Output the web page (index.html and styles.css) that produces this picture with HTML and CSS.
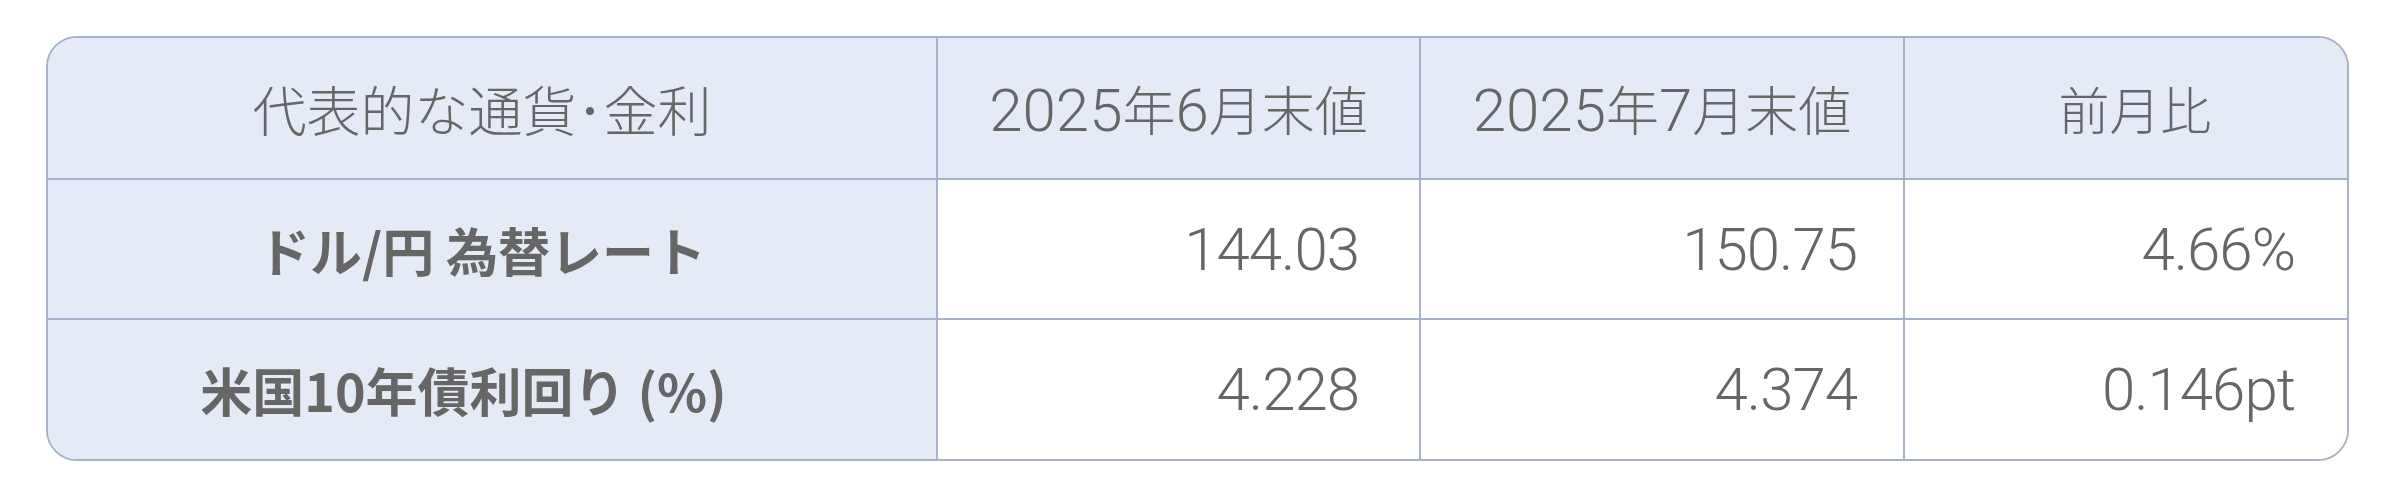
FILE: index.html
```html
<!DOCTYPE html>
<html lang="ja">
<head>
<meta charset="utf-8">
<title>代表的な通貨・金利</title>
<link rel="stylesheet" href="styles.css">
</head>
<body>
<main class="page">
  <div class="table-frame">
    <table class="rates">
      <colgroup>
        <col class="col-name">
        <col class="col-jun">
        <col class="col-jul">
        <col class="col-diff">
      </colgroup>
      <thead>
        <tr>
          <th class="head name">代表的な通貨･金利</th>
          <th class="head"><span class="num">2025</span>年<span class="num">6</span>月末値</th>
          <th class="head"><span class="num">2025</span>年<span class="num">7</span>月末値</th>
          <th class="head diff-head">前月比</th>
        </tr>
      </thead>
      <tbody>
        <tr>
          <th class="label">ドル/円 為替レート</th>
          <td class="value jun">144.03</td>
          <td class="value jul">150.75</td>
          <td class="value diff">4.66%</td>
        </tr>
        <tr>
          <th class="label label-wide">米国10年債利回り (%)</th>
          <td class="value jun">4.228</td>
          <td class="value jul">4.374</td>
          <td class="value diff">0.146pt</td>
        </tr>
      </tbody>
    </table>
  </div>
</main>
</body>
</html>
```

FILE: styles.css
```css
html, body {
  margin: 0;
  padding: 0;
  background: #ffffff;
}

.page {
  padding: 36px 51px 0 46px;
  font-family: "Roboto", "Noto Sans CJK JP", sans-serif;
  color: #666666;
}

.table-frame {
  border: 2px solid #a5b2c9;
  border-radius: 31px;
  overflow: hidden;
  background: #ffffff;
}

.rates {
  width: 100%;
  border-collapse: collapse;
  table-layout: fixed;
}

.col-name { width: 889px; }
.col-jun { width: 483px; }
.col-jul { width: 484px; }

.rates th,
.rates td {
  border: 2px solid #a5b2c9;
  padding: 0;
  vertical-align: middle;
}

.rates thead th { border-top: none; }
.rates tbody tr:last-child > * { border-bottom: none; }
.rates tr > *:first-child { border-left: none; }
.rates tr > *:last-child { border-right: none; }

.rates thead tr { height: 141px; }
.rates tbody tr { height: 140px; }

.rates .head {
  background: #e4eaf6;
  font-family: "Noto Sans CJK JP", sans-serif;
  font-weight: 300;
  font-size: 53px;
  text-align: center;
}

.rates .name {
  font-size: 54px;
  padding-right: 20px;
}

.rates .diff-head {
  font-size: 51px;
  padding-left: 18px;
}

.head .num {
  font-family: "Roboto", sans-serif;
  font-weight: 300;
  font-size: 60px;
}

.rates .label {
  background: #e4eaf6;
  font-family: "Noto Sans CJK JP", sans-serif;
  font-weight: 700;
  font-size: 52px;
  text-align: center;
  padding-right: 20px;
}

.rates .label-wide {
  padding-right: 57px;
}

.rates .value {
  background: #ffffff;
  font-family: "Roboto", sans-serif;
  font-weight: 300;
  font-size: 60px;
  letter-spacing: -1px;
  text-align: right;
}

.rates .jun { padding-right: 60px; }
.rates .jul { padding-right: 46px; }
.rates .diff { padding-right: 52px; }
```
